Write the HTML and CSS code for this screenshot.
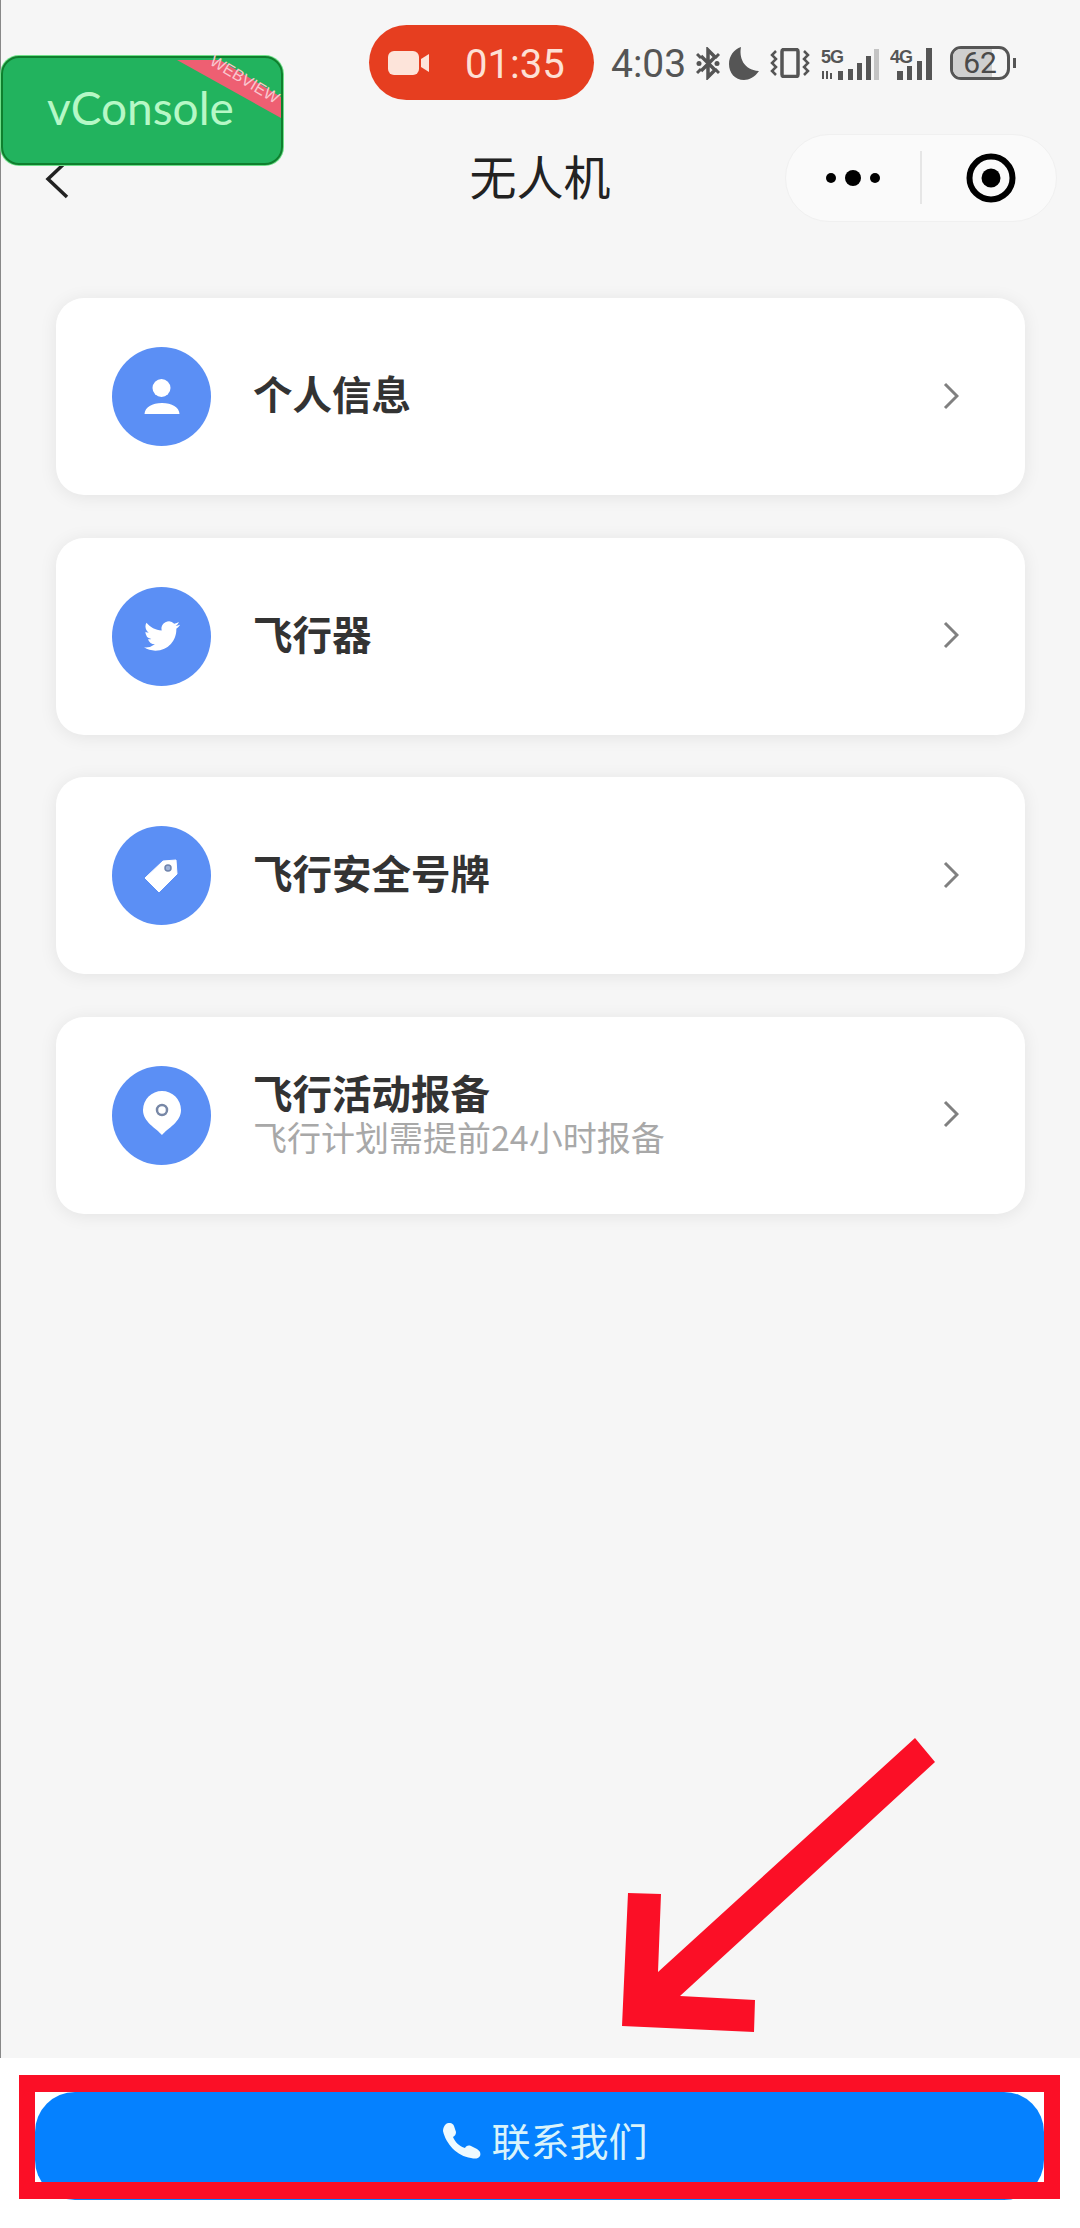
FILE: index.html
```html
<!DOCTYPE html>
<html lang="zh">
<head>
    <meta charset="UTF-8">
    <meta name="viewport" content="width=device-width, initial-scale=1.0">
    <title>无人机</title>
    <link rel="stylesheet" href="styles.css">
</head>
<body>
    <div class="page">
        <div class="status">
            <div class="rec">
                <svg class="rec-cam" viewBox="0 0 41 24"><rect x="0" y="0" width="31" height="24" rx="6"/><path d="M33 8 L41 3 V21 L33 16 Z"/></svg>
                <span class="rec-time">01:35</span>
            </div>
            <span class="time">4:03</span>
            <svg class="st-bt" viewBox="0 0 24 33"><path d="M5 9 L19 23 L12 30 V3 L19 10 L5 24" fill="none" stroke="#555" stroke-width="3.5"/><path d="M1 7 L5 11 M23 7 L19 11 M1 26 L5 22 M23 26 L19 22" stroke="#555" stroke-width="3"/><circle cx="3" cy="16.5" r="2.5" fill="#555"/><circle cx="21" cy="16.5" r="2.5" fill="#555"/></svg>
            <svg class="st-moon" viewBox="0 0 30 33"><path d="M12 0 C10 10 14 23 30 24 C26 30 20 33 15 33 C6 33 0 26 0 17 C0 9 5 2 12 0 Z" fill="#555"/></svg>
            <svg class="st-vib" viewBox="0 0 40 30"><rect x="12" y="1.5" width="16" height="27" rx="2" fill="none" stroke="#555" stroke-width="3.5"/><path d="M6 3 L2 7 L6 11 L2 15 L6 19 L2 23 L6 27 M34 3 L38 7 L34 11 L38 15 L34 19 L38 23 L34 27" fill="none" stroke="#555" stroke-width="2.5"/></svg>
            <svg class="st-5g" viewBox="0 0 60 34"><text x="0" y="16" class="sig-label">5G</text><path d="M2 24 V32 M6 24 V32 M10 26 V32" stroke="#555" stroke-width="2"/><g fill="#555"><rect x="17" y="24" width="5" height="9"/><rect x="27" y="22" width="5" height="11"/><rect x="36" y="16" width="5" height="17"/><rect x="45" y="9" width="5" height="24"/></g><rect x="53" y="2" width="5" height="31" fill="#c4c4c4"/></svg>
            <svg class="st-4g" viewBox="0 0 48 34"><text x="0" y="16" class="sig-label">4G</text><g fill="#555"><rect x="7" y="24" width="6" height="9"/><rect x="17" y="19" width="5" height="14"/><rect x="27" y="14" width="5" height="19"/><rect x="36" y="1" width="6" height="32"/></g></svg>
            <div class="battery"><span class="battery-fill"></span><span class="battery-num">62</span></div>
            <span class="battery-nub"></span>
        </div>

        <div class="navbar">
            <svg class="back" viewBox="0 0 24 40"><path d="M22 2 L3 20 L22 38" fill="none" stroke="#222" stroke-width="3.5"/></svg>
            <div class="nav-title">无人机</div>
            <div class="capsule">
                <svg class="cap-dots" viewBox="0 0 62 20"><circle cx="6" cy="10" r="5"/><circle cx="28" cy="10" r="8"/><circle cx="50" cy="10" r="5"/></svg>
                <span class="cap-line"></span>
                <svg class="cap-target" viewBox="0 0 50 50"><circle cx="25" cy="25" r="21.5" fill="none" stroke="#000" stroke-width="6"/><circle cx="25" cy="25" r="9.5"/></svg>
            </div>
        </div>

        <div class="list">
            <div class="card">
                <div class="card-icon">
                    <svg viewBox="0 0 50 50"><circle cx="24.5" cy="16" r="9"/><path d="M7.5 42 C8 35 15 31 25 31 S42 35 42.5 42 Z"/></svg>
                </div>
                <div class="card-text"><div class="card-title">个人信息</div></div>
                <svg class="arrow-right" viewBox="0 0 16 28"><path d="M2 2 L14 14 L2 26" fill="none" stroke="#808080" stroke-width="3"/></svg>
            </div>
            <div class="card">
                <div class="card-icon">
                    <svg class="bird" viewBox="0 0 24 24"><path d="M23.95 4.57a10 10 0 0 1-2.82.77 4.96 4.96 0 0 0 2.16-2.72c-.95.55-2 .96-3.12 1.19a4.92 4.92 0 0 0-8.38 4.48C7.69 8.09 4.07 6.13 1.64 3.16a4.82 4.82 0 0 0-.67 2.48c0 1.71.87 3.2 2.19 4.1a4.9 4.9 0 0 1-2.23-.62v.06a4.92 4.92 0 0 0 3.95 4.83 5 5 0 0 1-2.21.08 4.94 4.94 0 0 0 4.6 3.42A9.87 9.87 0 0 1 0 19.54a14 14 0 0 0 7.56 2.21c9.05 0 14-7.5 14-13.98 0-.21 0-.42-.02-.63a9.94 9.94 0 0 0 2.46-2.55z"/></svg>
                </div>
                <div class="card-text"><div class="card-title">飞行器</div></div>
                <svg class="arrow-right" viewBox="0 0 16 28"><path d="M2 2 L14 14 L2 26" fill="none" stroke="#808080" stroke-width="3"/></svg>
            </div>
            <div class="card">
                <div class="card-icon">
                    <svg viewBox="0 0 50 50"><path d="M8 27 L26 10 L39 9 L40 23 L22 41 Z" stroke="#fff" stroke-width="1" stroke-linejoin="round"/><circle cx="31" cy="17" r="3" fill="#9fb3d8" stroke="#6f84ad" stroke-width="1.5"/></svg>
                </div>
                <div class="card-text"><div class="card-title">飞行安全号牌</div></div>
                <svg class="arrow-right" viewBox="0 0 16 28"><path d="M2 2 L14 14 L2 26" fill="none" stroke="#808080" stroke-width="3"/></svg>
            </div>
            <div class="card">
                <div class="card-icon">
                    <svg viewBox="0 0 50 50"><path d="M25 45 C19 38 6 32 6 20 A19 19 0 0 1 44 20 C44 32 31 38 25 45 Z"/><circle cx="25" cy="20" r="5" fill="#fff" stroke="#7787a6" stroke-width="2.5"/></svg>
                </div>
                <div class="card-text two-line">
                    <div class="card-title">飞行活动报备</div>
                    <div class="card-sub">飞行计划需提前24小时报备</div>
                </div>
                <svg class="arrow-right" viewBox="0 0 16 28"><path d="M2 2 L14 14 L2 26" fill="none" stroke="#808080" stroke-width="3"/></svg>
            </div>
        </div>

        <div class="footer">
            <div class="contact-btn">
                <svg class="phone" viewBox="0 0 38 36"><path d="M3 1 C6 -1 10 0 11 3 L13 9 C13 11 12 13 10 14 C12 19 16 23 22 25 C23 23 25 22 28 23 L34 26 C37 28 38 30 37 33 C35 36 32 36 28 35 C14 33 3 21 0 8 C0 5 1 3 3 1 Z"/></svg>
                <span>联系我们</span>
            </div>
        </div>
    </div>

    <div class="vconsole">
        <svg class="vc-ribbon" viewBox="0 0 278 105">
            <polygon points="174,2 217,2 278,39 278,60" fill="#ee5f72"/>
            <text x="239" y="26" class="vc-ribbon-text" transform="rotate(31 239 26)">WEBVIEW</text>
        </svg>
        <span class="vc-label">vConsole</span>
    </div>

    <div class="mark-box"></div>
    <svg class="mark-arrow" viewBox="0 0 300 300"><polygon points="295,3 315,27 60,261 135,265 134,297 2,291 8,158 41,159 38,237" fill="#fb0f26"/></svg>
</body>
</html>
```

FILE: styles.css
```css
* {
    box-sizing: border-box;
}

body {
    margin: 0;
    width: 1080px;
    height: 2228px;
    overflow: hidden;
    position: relative;
    font-family: "Noto Sans CJK SC", "Noto Sans", sans-serif;
    background: #ffffff;
}

.page {
    height: 2228px;
    display: flex;
    flex-direction: column;
}

/* status bar */
.status {
    height: 125px;
    padding: 25px 0 0 369px;
    display: flex;
    align-items: flex-start;
    background: #f6f6f6;
    box-shadow: inset 1px 0 0 #888;
}

.rec {
    width: 225px;
    height: 75px;
    padding-left: 19px;
    display: flex;
    align-items: center;
    border-radius: 38px;
    background: #e63e20;
    color: #fde0d5;
    font-family: Roboto, sans-serif;
    font-size: 40px;
}

.rec-cam {
    width: 41px;
    height: 24px;
    margin-right: 36px;
    fill: #fde4da;
}

.rec-time {
    margin-top: 3px;
}

.time {
    margin: 14px 0 0 17px;
    width: 75px;
    font-family: Roboto, sans-serif;
    font-size: 39px;
    line-height: 50px;
    color: #555;
}

.st-bt { width: 24px; height: 33px; margin: 22px 0 0 10px; }
.st-moon { width: 30px; height: 33px; margin: 22px 0 0 9px; }
.st-vib { width: 40px; height: 30px; margin: 23px 0 0 11px; }
.st-5g { width: 60px; height: 34px; margin: 22px 0 0 11px; }
.st-4g { width: 48px; height: 34px; margin: 22px 0 0 9px; }

.sig-label {
    font-family: "Liberation Sans", sans-serif;
    font-size: 18px;
    font-weight: 700;
    letter-spacing: -1px;
    fill: #555;
}

.battery {
    position: relative;
    width: 60px;
    height: 34px;
    margin: 21px 0 0 12px;
    border: 3px solid #555;
    border-radius: 11px;
    overflow: hidden;
    display: flex;
    align-items: center;
    justify-content: center;
}

.battery-fill {
    position: absolute;
    left: 0;
    top: 0;
    bottom: 0;
    width: 72%;
    background: #cfcfcf;
}

.battery-num {
    position: relative;
    font-family: Roboto, sans-serif;
    font-size: 30px;
    line-height: 30px;
    color: #4a4a4a;
}

.battery-nub {
    width: 3px;
    height: 10px;
    margin: 33px 0 0 3px;
    background: #555;
}

/* navigation */
.navbar {
    height: 105px;
    display: grid;
    grid-template-columns: 1fr auto 1fr;
    align-items: center;
    background: #f6f6f6;
    box-shadow: inset 1px 0 0 #888;
}

.back {
    width: 24px;
    height: 40px;
    margin: 3px 0 0 45px;
}

.nav-title {
    margin-bottom: 5px;
    font-size: 47px;
    line-height: 60px;
    color: #222;
}

.capsule {
    justify-self: end;
    width: 272px;
    height: 88px;
    margin-right: 23px;
    display: flex;
    align-items: center;
    border-radius: 44px;
    background: #fafafa;
    border: 1px solid #f0f0f0;
}

.cap-dots {
    width: 62px;
    height: 20px;
    margin-left: 39px;
}

.cap-line {
    width: 2px;
    height: 53px;
    margin-left: 33px;
    background: #e6e6e6;
}

.cap-target {
    width: 50px;
    height: 50px;
    margin-left: 44px;
}

/* menu cards */
.list {
    flex: 1;
    padding: 68px 55px 0 56px;
    display: flex;
    flex-direction: column;
    gap: 42.5px;
    background: #f6f6f6;
    box-shadow: inset 1px 0 0 #888;
}

.card {
    height: 197px;
    padding: 0 66px 0 56px;
    display: flex;
    align-items: center;
    border-radius: 28px;
    background: #fff;
    box-shadow: 0 2px 18px rgba(0, 0, 0, 0.08);
}

.card-icon {
    width: 99px;
    height: 99px;
    flex-shrink: 0;
    display: flex;
    align-items: center;
    justify-content: center;
    border-radius: 50%;
    background: #5b8ff5;
}

.card-icon svg {
    width: 50px;
    height: 50px;
    fill: #fff;
}

.card-icon .bird {
    width: 36px;
    height: 36px;
}

.card-text {
    flex: 1;
    margin-left: 42px;
    padding-bottom: 7px;
}

.card-text.two-line {
    padding-bottom: 1px;
}

.card-title {
    font-size: 39.5px;
    line-height: 44px;
    font-weight: 700;
    color: #333;
}

.card-sub {
    margin-top: 1px;
    font-size: 34px;
    line-height: 44px;
    color: #a8a8a8;
}

.arrow-right {
    width: 16px;
    height: 28px;
    margin-bottom: 2px;
}

/* bottom button */
.footer {
    height: 170px;
    padding: 34px 36px 0 35px;
    background: #fff;
}

.contact-btn {
    height: 108px;
    padding: 0 0 14px 12px;
    display: flex;
    align-items: center;
    justify-content: center;
    gap: 10px;
    border-radius: 40px;
    background: #0581ff;
    color: #d9f3fb;
    font-size: 39px;
    line-height: 50px;
}

.phone {
    width: 38px;
    height: 36px;
    margin-top: 4px;
    fill: #eefaff;
}

/* floating debug button */
.vconsole {
    position: absolute;
    left: 1px;
    top: 56px;
    width: 282px;
    height: 109px;
    display: flex;
    align-items: center;
    border: 2px solid #0f7f2e;
    border-radius: 18px;
    background: #22b35e;
    box-shadow: 0 0 0 1px #6fe08a;
}

.vc-ribbon {
    position: absolute;
    left: 0;
    top: 0;
    width: 278px;
    height: 105px;
    overflow: visible;
}

.vc-ribbon-text {
    font-family: "Liberation Sans", sans-serif;
    font-size: 16px;
    text-anchor: middle;
    fill: #f9c7cf;
}

.vc-label {
    position: relative;
    margin: 0 0 6px 44px;
    font-family: Lato, sans-serif;
    font-size: 46px;
    line-height: 50px;
    color: #b6f8c6;
}

/* red annotation */
.mark-box {
    position: absolute;
    left: 19px;
    top: 2075px;
    width: 1041px;
    height: 124px;
    border: 17px solid #fb0f26;
    border-left-width: 16px;
    border-right-width: 16px;
}

.mark-arrow {
    position: absolute;
    left: 620px;
    top: 1735px;
    width: 300px;
    height: 300px;
    overflow: visible;
}
```
